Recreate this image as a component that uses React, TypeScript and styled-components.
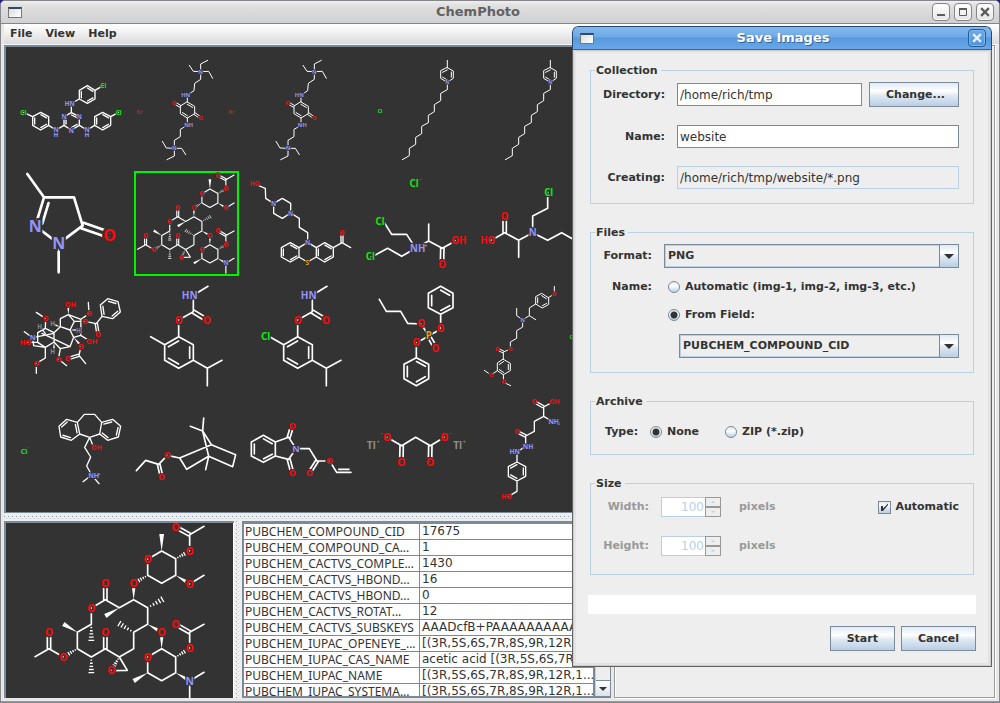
import React from "react";
import styled, { createGlobalStyle, css } from "styled-components";

/* ---------- theme ---------- */
const slate = "#7a8a99";
const pale = "#b8cfe5";
const panel = "#eeeeee";
const ink = "#333333";
const canvas = "#333333";
const ui = '"DejaVu Sans", Verdana, sans-serif';
const chem = '"Noto Sans", "DejaVu Sans", sans-serif';
const metal = "linear-gradient(#dfe9f3 0%, #ffffff 35%, #dfe8f1 55%, #b8cfe5 100%)";

const Global = createGlobalStyle`
  *, *::before, *::after { box-sizing: border-box; }
  html, body { margin: 0; background: #241b8a; }
  body { font: bold 11px/14px ${ui}; color: ${ink}; }
  button, input, select { font: inherit; color: inherit; margin: 0; }
`;

/* ---------- structure drawings ---------- */
type Pt = [number, number];
type Atom = [label: string, x: number, y: number, size?: number];
interface Molecule {
  bonds: string;
  atoms: Atom[];
  stroke: number;
  size: number;
  offset: number;
}

const red = "#ff0808";
const blue = "#9494fa";
const green = "#0bea0b";
const atomColor = (label: string) => {
  if (label.startsWith("Cl")) return green;
  if (label.startsWith("Br")) return "#a32a2a";
  if (label === "P" || label === "S") return "#f09c10";
  if (label.startsWith("Tl") || label === "H") return "#8c8c8c";
  if (label.includes("O") || label === "-") return red;
  return blue;
};

const points = (s: string): Pt[] => s.trim().split(/\s+/).map((p) => p.split(",").map(Number) as Pt);
const line = (a: Pt, b: Pt) => `M${a[0]} ${a[1]}L${b[0]} ${b[1]}`;

/* Second line of a double bond, drawn on the side where `toward` lies. */
const inner = (a: Pt, b: Pt, toward: Pt, off: number) => {
  const dx = b[0] - a[0], dy = b[1] - a[1], len = Math.hypot(dx, dy);
  let nx = -dy / len, ny = dx / len;
  if ((toward[0] - a[0]) * nx + (toward[1] - a[1]) * ny < 0) { nx = -nx; ny = -ny; }
  const t = 0.14;
  return line(
    [a[0] + dx * t + nx * off, a[1] + dy * t + ny * off],
    [b[0] - dx * t + nx * off, b[1] - dy * t + ny * off],
  );
};

/* Bond notation, one bond or chain per ";":
   plain chain, "=" double, "i" double beside a third point, "^" wedge, "#" hashed wedge,
   "h" plain ring, "o" ring doubled on even sides, "p" on odd sides, "q" on opposite sides. */
const drawBonds = ({ bonds, offset }: Molecule) => {
  const strokes: string[] = [];
  const fills: string[] = [];
  const hashes: string[] = [];
  bonds.split(";").map((s) => s.trim()).filter(Boolean).forEach((s) => {
    const kind = /^[=i^#hopq]/.test(s) ? s[0] : "";
    const p = points(kind ? s.slice(1) : s);
    const [a, b] = p;
    const dx = b[0] - a[0], dy = b[1] - a[1], len = Math.hypot(dx, dy);
    const nx = -dy / len, ny = dx / len;
    if (kind === "") strokes.push("M" + p.map((q) => q.join(" ")).join("L"));
    else if (kind === "=") {
      const k = offset / 2;
      strokes.push(line([a[0] + nx * k, a[1] + ny * k], [b[0] + nx * k, b[1] + ny * k]));
      strokes.push(line([a[0] - nx * k, a[1] - ny * k], [b[0] - nx * k, b[1] - ny * k]));
    } else if (kind === "i") {
      strokes.push(line(a, b), inner(a, b, p[2], offset));
    } else if (kind === "^") {
      const w = Math.max(3, len * 0.14);
      fills.push(`M${a[0]} ${a[1]}L${b[0] + nx * w} ${b[1] + ny * w}L${b[0] - nx * w} ${b[1] - ny * w}Z`);
    } else if (kind === "#") {
      for (let i = 1; i <= 5; i++) {
        const t = i / 5, w = 1 + len * 0.16 * t;
        const cx = a[0] + dx * t, cy = a[1] + dy * t;
        hashes.push(line([cx + nx * w, cy + ny * w], [cx - nx * w, cy - ny * w]));
      }
    } else {
      strokes.push("M" + p.map((q) => q.join(" ")).join("L") + "Z");
      const c: Pt = [p.reduce((n, q) => n + q[0], 0) / p.length, p.reduce((n, q) => n + q[1], 0) / p.length];
      const sides = { h: [], o: [0, 2, 4], p: [1, 3, 5], q: [0, 3] }[kind] as number[];
      sides.forEach((i) => strokes.push(inner(p[i], p[(i + 1) % p.length], c, offset)));
    }
  });
  return { strokes: strokes.join(""), fills: fills.join(""), hashes: hashes.join("") };
};

const Structure = ({ molecule, box, title }: { molecule: Molecule; box: string; title: string }) => {
  const { strokes, fills, hashes } = drawBonds(molecule);
  return (
    <svg viewBox={box} width="100%" height="100%" role="img" aria-label={title} preserveAspectRatio="xMinYMin meet">
      <g fill="none" stroke="#ffffff" strokeWidth={molecule.stroke} strokeLinejoin="round" strokeLinecap="round">
        <path d={strokes} />
        <path d={hashes} strokeWidth={4} strokeLinecap="butt" />
        <path d={fills} fill="#ffffff" stroke="none" />
      </g>
      {molecule.atoms.map(([label, x, y, size = molecule.size], i) => (
        <text
          key={i}
          x={x}
          y={y + size * 0.36}
          fontSize={size}
          fontFamily={chem}
          fontWeight={700}
          textAnchor="middle"
          fill={molecule === malonate && label === "+" ? "#8c8c8c" : molecule === chlorotriazine && label === "H" ? blue : atomColor(label)}
          stroke={canvas}
          strokeWidth={label === "-" || label === "+" ? 0 : size * 0.25}
          paintOrder="stroke"
        >
          {label}
        </text>
      ))}
    </svg>
  );
};

const chlorotriazine: Molecule = {
  stroke: 4, size: 19, offset: 6,
  bonds: `p 238,271 262,257 285,271 285,297 262,310 238,297; 285,271 309,257; 238,297 214,310 214,338;
    o 214,338 238,350 238,376 214,390 192,376 192,350; 238,376 261,390 284,376;
    o 284,376 284,350 308,337 332,350 332,376 308,390; 332,350 356,337;
    192,376 168,390 146,376; p 146,376 146,350 122,337 98,350 98,376 122,390; 98,350 70,337`,
  atoms: [["Cl", 310, 258], ["HN", 209, 311], ["N", 238, 351], ["N", 192, 351], ["N", 214, 391], ["H", 261, 405], ["N", 261, 390],
    ["H", 168, 405], ["N", 168, 390], ["Cl", 356, 338], ["Cl", 70, 338]],
};
const quinoneBonds = `602,215 602,192 623,181; 602,215 580,214 568,196; 602,215 626,214 638,235;
  602,215 602,238 584,250 582,272 562,285 562,306; q 562,306 584,319 584,341 562,354 541,341 541,319;
  = 541,319 522,308; = 584,341 602,354; 562,354 562,376 541,388 541,410 523,421 523,445;
  523,445 499,444 487,424; 523,445 545,445 557,464; 523,445 523,468 501,479`;
const quinoneAtoms: Atom[] = [["N", 602, 215], ["HN", 557, 285], ["O", 522, 308], ["O", 602, 354], ["NH", 566, 376], ["N", 523, 445]];
const quinone: Molecule = { stroke: 3, size: 17, offset: 6, bonds: quinoneBonds, atoms: quinoneAtoms };
const quinoneBromide: Molecule = { ...quinone, atoms: [...quinoneAtoms, ["Br", 418, 336], ["Br", 694, 336]] };

const pyridinium: Molecule = {
  stroke: 3, size: 15, offset: 6,
  bonds: `472,83 472,61; p 472,83 490,93 490,115 472,127 452,115 452,93;
    472,127 472,149 452,160 452,182 433,194 433,215 415,226 415,248 395,259 395,281 377,292 377,313 358,325 358,347 337,359`,
  atoms: [["N", 472, 127]],
};
const pyridiniumChloride: Molecule = { ...pyridinium, atoms: [["N", 472, 127], ["Cl", 270, 215]] };

const pyrazolone: Molecule = {
  stroke: 8, size: 48, offset: 18,
  bonds: `82,27 132,97 222,97 248,182 176,236 106,183; i 106,183 132,97 200,150; = 248,182 329,210; 176,236 176,322`,
  atoms: [["N", 106, 183], ["N", 176, 236], ["O", 329, 210]],
};

const macrolide: Molecule = {
  stroke: 5, size: 31, offset: 10,
  bonds: `h 443,133 485,108 527,131 527,181 485,205 443,181; ^ 485,108 485,57; # 527,131 560,113;
    569,108 569,59 612,34; = 569,59 527,36; ^ 527,181 562,202; 569,207 612,181; # 443,181 410,200;
    ^ 401,254 401,215; 401,254 358,278 316,254 274,279 274,328 232,352 232,401 274,426 316,401 358,426 401,401 401,352 443,328 443,278 401,254;
    = 316,254 316,205; ^ 358,278 316,303; # 443,278 487,253; ^ 443,328 478,348; # 401,352 358,326; # 274,328 274,376;
    ^ 232,352 190,327; # 232,401 200,420; 190,426 147,401 105,425; = 147,401 147,352; # 274,426 274,473; = 316,401 316,352;
    # 358,426 339,458; 334,467 382,466 358,426; ^ 485,401 485,362; h 485,401 527,426 527,473 485,497 443,473 443,426;
    # 527,426 560,406; 569,401 569,352 612,328; = 569,352 527,328; ^ 443,473 401,498; ^ 527,473 562,493; 612,472 569,498 569,550`,
  atoms: [["O", 443, 133], ["O", 569, 108], ["O", 527, 37], ["O", 569, 207], ["O", 401, 206], ["O", 316, 206], ["O", 274, 280],
    ["O", 485, 352], ["O", 190, 426], ["O", 147, 352], ["O", 316, 352], ["O", 334, 467], ["O", 443, 426], ["O", 569, 401],
    ["O", 527, 328], ["N", 569, 498]],
};
const macrolideSmall: Molecule = { ...macrolide, stroke: 6, size: 32 };

const phenothiazine: Molecule = {
  stroke: 4, size: 19, offset: 6,
  bonds: `44,57 76,70 77,100 101,115; h 101,115 127,100 152,115 152,144 127,160 101,145;
    152,144 178,160 178,187 203,203 203,232; h 203,232 229,248 229,276 202,291 177,276 177,248;
    o 177,248 151,233 124,248 124,276 151,291 177,276; p 229,248 254,233 280,248 280,276 254,291 229,276;
    280,248 306,233 332,248; = 306,233 306,203`,
  atoms: [["HO", 44, 57], ["N", 101, 115], ["N", 152, 145], ["N", 203, 233], ["S", 202, 292], ["O", 306, 203]],
};
const mustardSalt: Molecule = {
  stroke: 5, size: 29, offset: 10,
  bonds: `430,168 455,208 500,208 527,250 485,274 443,250 391,278; 524,250 566,228 566,177; 566,228 607,250 650,226; = 607,250 606,298`,
  atoms: [["Cl", 420, 169], ["Cl", 391, 274], ["NH", 533, 251], ["+", 558, 242, 16], ["OH", 657, 228], ["O", 606, 298], ["Cl", 522, 56], ["-", 541, 42, 20]],
};
const mustard: Molecule = {
  stroke: 5, size: 29, offset: 10,
  bonds: `923,82 923,130 878,153 878,203 836,226 794,203 750,228; = 794,203 794,155; 836,226 836,277; 878,203 923,226 965,203 1005,226`,
  atoms: [["Cl", 926, 82], ["N", 878, 203], ["O", 794, 155], ["HO", 743, 228]],
};
const aconitine: Molecule = {
  stroke: 4, size: 22, offset: 7,
  bonds: `^ 205,104 205,80; 181,140 181,116 205,104 243,118; ^ 181,140 165,135; 181,140 162,158 136,145 137,116 109,97;
    136,145 113,158 113,187 136,202 162,186 162,158; 73,155 98,173 101,197 136,202; ^ 162,186 162,208; 126,160 210,200;
    98,173 162,160; 181,140 210,150 223,124 205,104; ^ 210,150 230,150; 223,124 255,124 289,131 306,109;
    o 306,109 301,75 323,56 354,65 361,96 338,116; = 289,131 294,162; 243,118 267,101 265,67; 243,118 242,166 268,182;
    242,166 221,172 210,150; ^ 221,172 238,192; 243,198 237,226 257,251; = 237,226 203,236; 221,172 210,200 181,206 162,186;
    181,206 175,237 200,257; 136,202 136,234 109,250 109,280; 80,187 113,187; 119,139 136,160`,
  atoms: [["OH", 211, 74], ["H", 158, 132, 19], ["H", 119, 139, 19], ["H", 235, 151, 19], ["H", 158, 216, 19], ["O", 137, 116], ["N", 98, 173],
    ["HO", 76, 188], ["O", 255, 124], ["O", 294, 162], ["O", 267, 101], ["OH", 275, 184], ["O", 243, 198], ["O", 203, 236],
    ["O", 175, 237], ["O", 109, 250]],
};
const carbamateBonds = `624,19 580,46 580,95 536,120 536,170; = 580,95 621,120; p 536,170 580,194 580,241 536,265 494,241 494,194;
  494,194 452,170; 580,241 622,265 666,241; 622,265 622,317`;
const carbamateAtoms: Atom[] = [["HN", 569, 46], ["O", 536, 120], ["O", 621, 120]];
const carbamate: Molecule = { stroke: 5, size: 30, offset: 11, bonds: carbamateBonds, atoms: carbamateAtoms };
const chloroCarbamate: Molecule = { ...carbamate, atoms: [...carbamateAtoms, ["Cl", 440, 169]] };

const phosphate: Molecule = {
  stroke: 5, size: 29, offset: 10,
  bonds: `418,58 439,94 482,94 503,130 544,132 566,168 602,147 602,103; p 602,103 565,83 565,40 602,19 639,40 639,83;
    = 566,168 587,205; 566,168 529,189 529,233; o 529,233 566,253 566,296 529,317 492,296 492,253`,
  atoms: [["O", 544, 132], ["P", 566, 168], ["O", 602, 147], ["O", 587, 205], ["O", 529, 189]],
};
const mebeverine: Molecule = {
  stroke: 3, size: 17, offset: 6,
  bonds: `943,19 943,42 925,53; o 925,53 905,40 887,50 887,72 907,84 925,74; 887,72 868,84 868,107 848,119 830,107 830,85;
    868,107 887,119; 848,119 848,141 830,152 830,175 811,186 811,207 790,216 790,238; = 790,216 772,207;
    p 790,238 811,250 811,272 790,284 772,272 772,250; 772,272 753,285 733,271; 790,284 791,307 812,317`,
  atoms: [["O", 943, 42], ["N", 848, 119], ["O", 811, 208], ["O", 772, 208], ["O", 753, 285], ["O", 791, 307], ["Cl", 996, 173, 14]],
};
const dibenzosuberol: Molecule = {
  stroke: 4, size: 21, offset: 7,
  bonds: `p 232,82 200,73 177,94 182,126 214,136 239,117; o 305,82 338,73 362,94 355,126 323,136 299,117;
    232,82 253,58 284,58 305,82; 239,117 269,127 299,117; 269,127 280,155; 269,127 254,157 272,186 260,213 275,240 249,260; 275,240 297,266`,
  atoms: [["OH", 289, 158], ["NH", 281, 241], ["+", 298, 236, 12], ["Cl", 72, 170], ["-", 84, 157, 16]],
};
const bornyl: Molecule = {
  stroke: 5, size: 25, offset: 8,
  bonds: `409,227 437,196 476,208 502,181 539,189 634,149 707,179 698,215 626,184 560,223 539,189;
    617,224 626,184 608,108 634,149; 571,94 608,108 611,69; = 476,208 485,246`,
  atoms: [["O", 502, 181], ["O", 485, 246]],
};
const phthalimide: Molecule = {
  stroke: 5, size: 27, offset: 9,
  bonds: `o 70,121 106,141 106,183 70,202 34,183 34,141; 106,141 146,127 168,161 146,193 106,183; = 146,127 157,91;
    = 146,193 157,234; 168,161 208,161 231,198 269,198 290,232; = 231,198 208,234; i 290,232 333,232 310,210`,
  atoms: [["N", 168, 162], ["O", 157, 91], ["O", 157, 234], ["O", 208, 234], ["O", 269, 198]],
};
const malonate: Molecule = {
  stroke: 5, size: 31, offset: 10,
  bonds: `441,127 485,152 527,127 571,152 613,127; = 485,152 484,202; = 571,152 570,202`,
  atoms: [["O", 441, 127], ["O", 613, 127], ["O", 484, 202], ["O", 570, 202], ["Tl", 394, 152], ["Tl", 653, 152],
    ["+", 415, 142, 16], ["+", 673, 142, 16], ["-", 424, 113, 20], ["-", 630, 113, 20]],
};
const agaritine: Molecule = {
  stroke: 4, size: 20, offset: 7,
  bonds: `= 883,20 911,36; 936,22 911,36 911,64 935,78; 911,64 883,79 883,109 857,123 857,155 831,170 831,201; = 857,123 831,110;
    p 831,201 857,215 857,244 831,258 805,244 805,215; 831,258 831,289 805,304`,
  atoms: [["O", 883, 20], ["OH", 943, 20], ["NH", 941, 79], ["2", 956, 85, 10], ["O", 831, 110], ["NH", 864, 155], ["HN", 824, 170], ["HO", 799, 306]],
};

const gallery: { molecule: Molecule; box: string; title: string; selected?: boolean }[] = [
  { molecule: chlorotriazine, box: "57 174 315 315", title: "Chlorinated triazine" },
  { molecule: quinoneBromide, box: "402 174 315 315", title: "Quinone bromide" },
  { molecule: quinone, box: "406 174 315 315", title: "Quinone" },
  { molecule: pyridiniumChloride, box: "222 54 315 315", title: "Pyridinium chloride" },
  { molecule: pyridinium, box: "258 54 315 315", title: "Pyridinium" },
  { molecule: pyrazolone, box: "57 18 315 315", title: "Pyrazolone" },
  { molecule: macrolideSmall, box: "86 13 552 552", title: "Macrolide", selected: true },
  { molecule: phenothiazine, box: "27 18 315 315", title: "Phenothiazine" },
  { molecule: mustardSalt, box: "372 18 315 315", title: "Alanine mustard chloride" },
  { molecule: mustard, box: "717 18 315 315", title: "Alanine mustard" },
  { molecule: aconitine, box: "57 12 315 315", title: "Aconitine" },
  { molecule: carbamate, box: "402 12 315 315", title: "Carbamate" },
  { molecule: chloroCarbamate, box: "390 12 315 315", title: "Chloro carbamate" },
  { molecule: phosphate, box: "372 12 315 315", title: "Diphenyl phosphate" },
  { molecule: mebeverine, box: "717 12 315 315", title: "Mebeverine" },
  { molecule: dibenzosuberol, box: "57 6 315 315", title: "Dibenzosuberol chloride" },
  { molecule: bornyl, box: "402 6 315 315", title: "Bornyl ester" },
  { molecule: phthalimide, box: "27 6 315 315", title: "Phthalimide" },
  { molecule: malonate, box: "372 6 315 315", title: "Thallium malonate" },
  { molecule: agaritine, box: "717 6 315 315", title: "Agaritine" },
];

const properties: [string, string][] = [
  ["PUBCHEM_COMPOUND_CID", "17675"],
  ["PUBCHEM_COMPOUND_CA...", "1"],
  ["PUBCHEM_CACTVS_COMPLE...", "1430"],
  ["PUBCHEM_CACTVS_HBOND...", "16"],
  ["PUBCHEM_CACTVS_HBOND...", "0"],
  ["PUBCHEM_CACTVS_ROTAT...", "12"],
  ["PUBCHEM_CACTVS_SUBSKEYS", "AAADcfB+PAAAAAAAAAAAA"],
  ["PUBCHEM_IUPAC_OPENEYE_...", "[(3R,5S,6S,7R,8S,9R,12R,1..."],
  ["PUBCHEM_IUPAC_CAS_NAME", "acetic acid [(3R,5S,6S,7R,8..."],
  ["PUBCHEM_IUPAC_NAME", "[(3R,5S,6S,7R,8S,9R,12R,1..."],
  ["PUBCHEM_IUPAC_SYSTEMA...", "[(3R,5S,6S,7R,8S,9R,12R,1..."],
];

/* ---------- main window ---------- */
const Desktop = styled.div`
  position: relative;
  display: flex;
  min-height: 100vh;
`;
const Window = styled.main`
  flex: 1;
  min-width: 0;
  display: flex;
  flex-direction: column;
  border: 1px solid #85858a;
  border-radius: 5px 5px 0 0;
  background: #e8e8e8;
  overflow: hidden;
`;
const TitleBar = styled.header`
  display: grid;
  grid-template-columns: 20px 1fr 66px;
  align-items: center;
  height: 23px;
  padding: 0 5px 0 7px;
  background: linear-gradient(#efefef, #e0e0e1 20%, #cfd0d1);
  border-bottom: 1px solid #858585;
`;
const TitleText = styled.h1`
  margin: 0;
  font: bold 13px/18px ${ui};
  color: #626262;
  text-align: center;
`;
const WindowGlyph = styled.span`
  width: 14px;
  height: 11px;
  border: 1px solid #777;
  border-top: 2px solid #2f4a63;
  background: linear-gradient(135deg, #ddd, #fff);
`;
const Controls = styled.div`
  display: flex;
  justify-content: flex-end;
  gap: 4px;
`;
const ControlButton = styled.button<{ $blue?: boolean }>`
  display: grid;
  place-items: center;
  width: 18px;
  height: 18px;
  padding: 0;
  border-radius: 4px;
  border: 1px solid ${(p) => (p.$blue ? "#245a94" : "#858585")};
  background: ${(p) => (p.$blue ? "linear-gradient(#6faae6, #4f94dc)" : "linear-gradient(#ffffff, #e4e6e6)")};
  box-shadow: inset 0 0 0 1px ${(p) => (p.$blue ? "#7db5ec" : "#f6f6f6")};
`;
const MenuBar = styled.nav`
  display: flex;
  gap: 13px;
  align-items: center;
  height: 21px;
  margin-left: 3px;
  padding-left: 6px;
  background: linear-gradient(#ffffff, #f2f2f2 40%, #dadada);
  border-bottom: 1px solid #f6f6f6;
`;
const MenuItem = styled.button`
  padding: 0;
  border: 0;
  background: none;
`;
const Workspace = styled.div`
  flex: 1;
  min-height: 0;
  display: grid;
  grid-template-columns: minmax(0, 607fr) minmax(0, 381fr);
  gap: 3px;
  padding: 0 4px 3px 3px;
  border-bottom: 1px solid #9a9a9a;
`;
const MainColumn = styled.div`
  min-width: 0;
  display: flex;
  flex-direction: column;
`;
const Gallery = styled.section`
  flex: 1;
  display: grid;
  grid-template-columns: repeat(5, 105px);
  grid-auto-rows: 105px;
  gap: 8px 10px;
  padding: 11px 0 0 13px;
  border: solid ${slate};
  border-width: 2px 0 1px 2px;
  background: ${canvas};
  box-shadow: 0 1px 0 #ffffff;
  overflow: hidden;
`;
const Thumb = styled.figure<{ $selected?: boolean }>`
  margin: 0;
  display: flex;
  ${(p) => p.$selected && css`box-shadow: inset 0 0 0 2px #00f400;`}
  svg { display: block; overflow: visible; }
`;
const Splitter = styled.div<{ $vertical?: boolean }>`
  ${(p) => (p.$vertical ? "width: 8px;" : "height: 8px;")}
  flex: none;
  border: solid ${panel};
  border-width: ${(p) => (p.$vertical ? "0 2px 0 2px" : "3px 0 2px 0")};
  background:
    conic-gradient(at 1px 1px, transparent 75%, #93a1ae 0) 0 0 / 4px 4px,
    conic-gradient(at 1px 1px, transparent 75%, #c3cbd3 0) 2px 2px / 4px 4px,
    ${panel};
`;
const Details = styled.section`
  flex: none;
  height: 177px;
  display: grid;
  grid-template-columns: 230px 8px minmax(0, 1fr);
`;
const Preview = styled.div`
  overflow: hidden;
  background: ${canvas};
  border: solid ${slate};
  border-width: 2px 0 0 2px;
  box-shadow: inset -1px 0 0 #ffffff;
  svg { display: block; width: 227px; height: 175px; }
`;
const TablePane = styled.div`
  display: grid;
  grid-template-columns: minmax(0, 1fr) 16px;
  border: solid ${slate};
  border-width: 3px 0 2px 2px;
  background: #ffffff;
  overflow: hidden;
`;
const TableClip = styled.div`
  height: 172px;
  overflow: hidden;
  border-right: 2px solid ${slate};
`;
const PropertyTable = styled.table`
  width: 100%;
  table-layout: fixed;
  border-collapse: separate;
  border-spacing: 0;
`;
const cell = css`
  height: 16px;
  padding: 0 0 0 1px;
  border-bottom: 1px solid ${slate};
  font-weight: normal;
  line-height: 15px;
  text-align: left;
  white-space: nowrap;
  overflow: hidden;
`;
const NameCell = styled.th`
  ${cell}
  width: 176px;
  border-right: 1px solid ${slate};
  font-family: "Noto Sans", sans-serif;
  font-size: 12px;
`;
const ValueCell = styled.td`
  ${cell}
  padding-left: 2px;
  font-size: 12px;
`;
const ScrollTrack = styled.div`
  display: flex;
  flex-direction: column;
  justify-content: flex-end;
  background: ${panel};
  border-left: 1px solid ${pale};
  border-right: 1px solid ${slate};
`;
const ScrollArrow = styled.button`
  display: grid;
  place-items: center;
  height: 16px;
  padding: 0;
  border: 0;
  border-top: 1px solid ${slate};
  background: linear-gradient(#fff, #dde3ea);
`;
const SidePanel = styled.aside`
  background: ${panel};
  border: 1px solid #9a9a9a;
  box-shadow: 1px 1px 0 #ffffff, inset 1px 1px 0 #ffffff;
`;

/* ---------- dialog ---------- */
const Dialog = styled.section`
  position: absolute;
  top: 26px;
  right: 8px;
  width: 420px;
  border-radius: 6px 6px 0 0;
  background: ${panel};
  overflow: hidden;
`;
const DialogTitle = styled.header`
  display: grid;
  grid-template-columns: 28px 1fr 28px;
  align-items: center;
  height: 24px;
  padding: 0 5px 0 7px;
  border: 1px solid #26486f;
  border-bottom-color: #2f66a3;
  border-radius: 6px 6px 0 0;
  background: linear-gradient(#82b8ee, #6ea9e6 45%, #5899dc 50%, #68a8e9);
`;
const DialogHeading = styled.h2`
  margin: 0;
  font: bold 13px/18px ${ui};
  color: #ffffff;
  text-align: center;
  text-shadow: 1px 1px 0 #31659b;
`;
const DialogBody = styled.form`
  display: flex;
  flex-direction: column;
  gap: 22px;
  padding: 14px 15px 15px 15px;
  border: solid #626262;
  border-width: 0 1px 1px;
  box-shadow: inset 0 0 0 1px #cccccc, inset 0 0 0 3px #e4e4e4;
`;
const Group = styled.fieldset`
  min-width: 0;
  margin: 0 2px;
  padding: 0;
  border: 1px solid ${pale};
`;
const Legend = styled.legend`
  margin-left: 4px;
  padding: 0 3px 0 1px;
  line-height: 13px;
`;
const FormGrid = styled.div<{ $label: number; $gap: number }>`
  display: grid;
  grid-template-columns: ${(p) => p.$label}px minmax(0, 1fr);
  gap: ${(p) => p.$gap}px 12px;
  align-items: center;
  padding: 5px 14px 14px 12px;
`;
const FieldLabel = styled.label<{ $dim?: boolean }>`
  text-align: right;
  white-space: nowrap;
  color: ${(p) => (p.$dim ? "#999999" : ink)};
`;
const Caption = styled.span`
  text-align: right;
`;
const Pair = styled.div`
  display: grid;
  grid-template-columns: minmax(0, 1fr) 90px;
  gap: 7px;
  align-items: center;
`;
const TextField = styled.input`
  width: 100%;
  height: 23px;
  padding: 0 2px;
  border: 1px solid ${slate};
  border-radius: 0;
  background: #ffffff;
  font-size: 12px;
  font-weight: normal;
  outline: 0;
  &:read-only { border-color: ${pale}; background: ${panel}; }
`;
const PushButton = styled.button`
  height: 25px;
  padding: 0 16px;
  border: 1px solid ${slate};
  background: ${metal};
`;
const Combo = styled.span<{ $indent?: boolean }>`
  display: grid;
  grid-template-columns: minmax(0, 1fr) 19px;
  height: 24px;
  margin-left: ${(p) => (p.$indent ? 15 : 0)}px;
  border: 1px solid ${slate};
`;
const ComboSelect = styled.select`
  grid-area: 1 / 1 / 2 / 3;
  appearance: none;
  padding: 0 22px 0 2px;
  border: 1px solid ${pale};
  border-radius: 0;
  background: ${panel};
  outline: 0;
`;
const ComboArrow = styled.span`
  grid-area: 1 / 2;
  z-index: 1;
  display: grid;
  place-items: center;
  border-left: 1px solid ${slate};
  background: ${metal};
  pointer-events: none;
`;
const Choice = styled.label<{ $width?: number }>`
  display: flex;
  align-items: center;
  gap: 5px;
  height: 18px;
  width: ${(p) => (p.$width ? p.$width + "px" : "auto")};
  white-space: nowrap;
`;
const Radio = styled.input`
  appearance: none;
  flex: none;
  width: 12px;
  height: 12px;
  border: 1px solid ${slate};
  border-radius: 50%;
  background: linear-gradient(#dfe9f3, #fff 40%, #b8cfe5);
  &:checked { background: radial-gradient(circle, ${ink} 3px, transparent 4px), linear-gradient(#dfe9f3, #fff 40%, #b8cfe5); }
`;
const FileChoices = styled.div`
  display: grid;
  padding-left: 4px;
`;
const ArchiveRow = styled.div`
  display: flex;
  align-items: center;
  gap: 10px;
  height: 46px;
  padding: 2px 14px 0;
`;
const ArchiveCaption = styled.span`
  width: 35px;
`;
const SizeGrid = styled.div`
  display: grid;
  grid-template-columns: 46px 60px auto 1fr;
  gap: 19px 12px;
  align-items: center;
  padding: 7px 14px 18px 12px;
`;
const Spinner = styled.span`
  display: grid;
  grid-template-columns: 44px 16px;
  grid-template-rows: 10px 10px;
`;
const SpinInput = styled.input`
  grid-row: 1 / 3;
  width: 44px;
  height: 20px;
  padding: 0 1px;
  border: 1px solid ${pale};
  border-right: 0;
  background: #ffffff;
  color: ${pale};
  font-size: 12px;
  font-weight: normal;
  text-align: right;
`;
const SpinButton = styled.button`
  display: grid;
  place-items: center;
  padding: 0;
  border: 1px solid #999999;
  background: ${panel};
`;
const Unit = styled.span`
  padding-left: 6px;
  color: #999999;
`;
const Tick = styled.label`
  display: flex;
  align-items: center;
  justify-content: flex-end;
  gap: 4px;
`;
const TickInput = styled.input`
  appearance: none;
  grid-area: 1 / 1;
  width: 13px;
  height: 13px;
  border: 1px solid ${slate};
  background: ${metal};
`;
const TickBox = styled.span`
  display: grid;
  svg { grid-area: 1 / 1; pointer-events: none; z-index: 1; }
`;
const Footer = styled.footer`
  display: grid;
  gap: 12px;
  margin-top: -2px;
`;
const Progress = styled.div`
  height: 19px;
  background: #ffffff;
`;
const Actions = styled.div`
  display: flex;
  justify-content: flex-end;
  gap: 6px;
`;

const Triangle = ({ up, size = 10, color = ink }: { up?: boolean; size?: number; color?: string }) => (
  <svg width={size} height={size / 2} viewBox="0 0 10 5" aria-hidden="true">
    <path d={up ? "M0 5L5 0L10 5Z" : "M0 0L5 5L10 0Z"} fill={color} />
  </svg>
);
const Cross = ({ color }: { color: string }) => (
  <svg width="10" height="10" viewBox="0 0 10 10" aria-hidden="true">
    <path d="M2 2L8 8M8 2L2 8" stroke={color} strokeWidth="2.4" strokeLinecap="square" />
  </svg>
);

const SizeRow = ({ id, label }: { id: string; label: string }) => (
  <>
    <FieldLabel htmlFor={id} $dim>{label}</FieldLabel>
    <Spinner>
      <SpinInput id={id} defaultValue="100" disabled />
      <SpinButton type="button" disabled aria-label={`Increase ${id}`}><Triangle up size={4} color={pale} /></SpinButton>
      <SpinButton type="button" disabled aria-label={`Decrease ${id}`}><Triangle size={4} color={pale} /></SpinButton>
    </Spinner>
    <Unit>pixels</Unit>
  </>
);

const SaveImages = () => (
  <Dialog role="dialog" aria-labelledby="save-title">
    <DialogTitle>
      <WindowGlyph />
      <DialogHeading id="save-title">Save Images</DialogHeading>
      <Controls>
        <ControlButton $blue type="button" aria-label="Close dialog"><Cross color="#e6f1fc" /></ControlButton>
      </Controls>
    </DialogTitle>
    <DialogBody>
      <Group>
        <Legend>Collection</Legend>
        <FormGrid $label={62} $gap={18}>
          <FieldLabel htmlFor="directory">Directory:</FieldLabel>
          <Pair>
            <TextField id="directory" defaultValue="/home/rich/tmp" />
            <PushButton type="button">Change...</PushButton>
          </Pair>
          <FieldLabel htmlFor="name">Name:</FieldLabel>
          <TextField id="name" defaultValue="website" />
          <FieldLabel htmlFor="creating">Creating:</FieldLabel>
          <TextField id="creating" value="/home/rich/tmp/website/*.png" readOnly />
        </FormGrid>
      </Group>
      <Group>
        <Legend>Files</Legend>
        <FormGrid $label={49} $gap={10}>
          <FieldLabel htmlFor="format">Format:</FieldLabel>
          <Combo>
            <ComboSelect id="format"><option>PNG</option></ComboSelect>
            <ComboArrow><Triangle /></ComboArrow>
          </Combo>
          <Caption>Name:</Caption>
          <FileChoices>
            <Choice><Radio type="radio" name="naming" />Automatic (img-1, img-2, img-3, etc.)</Choice>
          </FileChoices>
          <span />
          <FileChoices>
            <Choice><Radio type="radio" name="naming" defaultChecked />From Field:</Choice>
          </FileChoices>
          <span />
          <Combo $indent>
            <ComboSelect aria-label="Field"><option>PUBCHEM_COMPOUND_CID</option></ComboSelect>
            <ComboArrow><Triangle /></ComboArrow>
          </Combo>
        </FormGrid>
      </Group>
      <Group>
        <Legend>Archive</Legend>
        <ArchiveRow>
          <ArchiveCaption>Type:</ArchiveCaption>
          <Choice $width={65}><Radio type="radio" name="archive" defaultChecked />None</Choice>
          <Choice><Radio type="radio" name="archive" />ZIP (*.zip)</Choice>
        </ArchiveRow>
      </Group>
      <Group>
        <Legend>Size</Legend>
        <SizeGrid>
          <SizeRow id="width" label="Width:" />
          <Tick>
            <TickBox>
              <TickInput type="checkbox" defaultChecked />
              <svg width="13" height="13" viewBox="0 0 13 13" aria-hidden="true">
                <path d="M3 5V10H5L10 4V2.5L5 7.5V5Z" fill={ink} />
              </svg>
            </TickBox>
            Automatic
          </Tick>
          <SizeRow id="height" label="Height:" />
        </SizeGrid>
      </Group>
      <Footer>
        <Progress role="progressbar" aria-label="Progress" aria-valuenow={0} />
        <Actions>
          <PushButton type="button">Start</PushButton>
          <PushButton type="button">Cancel</PushButton>
        </Actions>
      </Footer>
    </DialogBody>
  </Dialog>
);

export default function App() {
  return (
    <Desktop>
      <Global />
      <Window>
        <TitleBar>
          <WindowGlyph />
          <TitleText>ChemPhoto</TitleText>
          <Controls>
            <ControlButton aria-label="Minimize">
              <svg width="10" height="10" viewBox="0 0 10 10"><path d="M1 8H9" stroke="#5c5c5c" strokeWidth="2" /></svg>
            </ControlButton>
            <ControlButton aria-label="Maximize">
              <svg width="10" height="10" viewBox="0 0 10 10"><path d="M1.5 2V8.5H8.5V2" fill="none" stroke="#5c5c5c" /><path d="M1 2H9" stroke="#5c5c5c" strokeWidth="2" /></svg>
            </ControlButton>
            <ControlButton aria-label="Close"><Cross color="#5c5c5c" /></ControlButton>
          </Controls>
        </TitleBar>
        <MenuBar>
          <MenuItem>File</MenuItem>
          <MenuItem>View</MenuItem>
          <MenuItem>Help</MenuItem>
        </MenuBar>
        <Workspace>
          <MainColumn>
            <Gallery aria-label="Structures">
              {gallery.map((g) => (
                <Thumb key={g.title} $selected={g.selected}>
                  <Structure molecule={g.molecule} box={g.box} title={g.title} />
                </Thumb>
              ))}
            </Gallery>
            <Splitter />
            <Details>
              <Preview>
                <Structure molecule={macrolide} box="18 24 681 525" title="Selected structure" />
              </Preview>
              <Splitter $vertical />
              <TablePane>
                <TableClip>
                  <PropertyTable>
                    <tbody>
                      {properties.map(([name, value], i) => (
                        <tr key={i}>
                          <NameCell scope="row">{name}</NameCell>
                          <ValueCell>{value}</ValueCell>
                        </tr>
                      ))}
                    </tbody>
                  </PropertyTable>
                </TableClip>
                <ScrollTrack>
                  <ScrollArrow aria-label="Scroll down"><Triangle size={8} /></ScrollArrow>
                </ScrollTrack>
              </TablePane>
            </Details>
          </MainColumn>
          <SidePanel aria-label="Options" />
        </Workspace>
      </Window>
      <SaveImages />
    </Desktop>
  );
}
